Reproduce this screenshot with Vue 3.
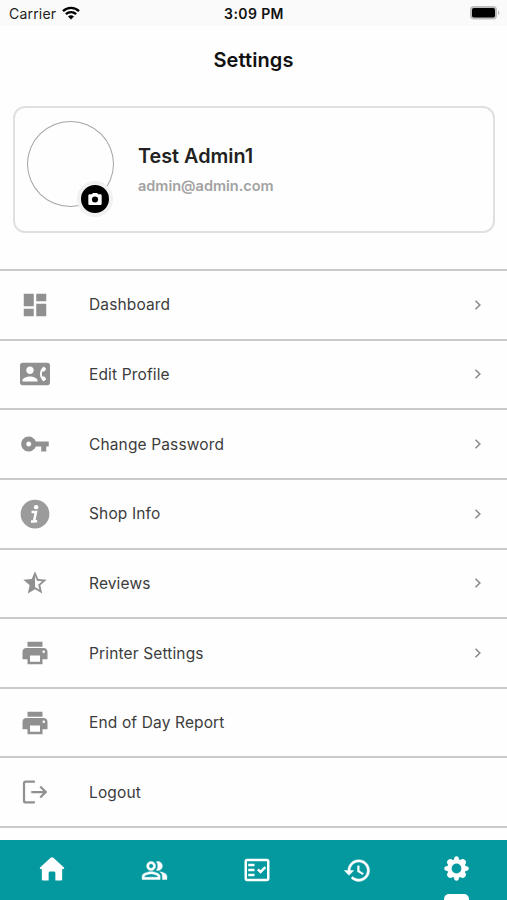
<template>
  <div class="screen">
    <!-- status bar -->
    <div class="status-bar">
      <div class="carrier">
        <span>Carrier</span>
        <svg class="wifi" viewBox="0 0 18 14">
          <path d="M1 5.2a11.4 11.4 0 0 1 16 0" />
          <path d="M3.9 8.2a7.3 7.3 0 0 1 10.2 0" />
          <path class="wifi-dot" d="M9 13.6l-3-3a4.3 4.3 0 0 1 6 0z" />
        </svg>
      </div>
      <span class="time">3:09 PM</span>
      <svg class="battery" viewBox="0 0 32 16">
        <rect x="1" y="1" width="27" height="13.5" rx="4" fill="#bdbdbd" />
        <path d="M29 5.2a3 3 0 0 1 0 5z" fill="#bdbdbd" />
        <rect x="3" y="3" width="23" height="9.5" rx="1.8" fill="#000" />
      </svg>
    </div>

    <h1 class="title">Settings</h1>

    <!-- profile card -->
    <div class="profile">
      <div class="avatar">
        <button class="camera" aria-label="camera">
          <svg viewBox="0 0 24 24">
            <path :d="cameraIcon" />
            <circle cx="12" cy="12.8" r="4.6" fill="#000" />
          </svg>
        </button>
      </div>
      <div class="profile-text">
        <p class="name">{{ user.name }}</p>
        <p class="email">{{ user.email }}</p>
      </div>
    </div>

    <!-- menu -->
    <ul class="menu">
      <li v-for="item in menuItems" :key="item.label" class="menu-item">
        <svg class="menu-icon" :class="item.icon" viewBox="0 0 24 24">
          <path :d="icons[item.icon]" />
          <g v-if="item.icon === 'info'" class="info-mark">
            <circle cx="12.9" cy="6.5" r="1.8" />
            <path d="M9.2 10.4h3.6l-1.4 6.6q-.2 1.3 2.3.6M8.8 18h3" />
          </g>
        </svg>
        <span class="menu-label">{{ item.label }}</span>
        <svg v-if="item.arrow" class="arrow" viewBox="0 0 8 12">
          <path d="M1.5 1.7l4.3 4.3-4.3 4.3" />
        </svg>
      </li>
    </ul>

    <!-- bottom tabs -->
    <nav class="tabs">
      <button
        v-for="tab in tabs"
        :key="tab"
        class="tab"
        :class="{ active: tab === activeTab }"
        :aria-label="tab"
        @click="activeTab = tab"
      >
        <svg :class="'tab-' + tab" viewBox="0 0 24 24">
          <path fill-rule="evenodd" :d="tabIcons[tab]" />
        </svg>
      </button>
    </nav>
  </div>
</template>

<script setup>
import { ref } from 'vue';

const user = { name: 'Test Admin1', email: 'admin@admin.com' };

const menuItems = [
  { label: 'Dashboard', icon: 'dashboard', arrow: true },
  { label: 'Edit Profile', icon: 'contact', arrow: true },
  { label: 'Change Password', icon: 'key', arrow: true },
  { label: 'Shop Info', icon: 'info', arrow: true },
  { label: 'Reviews', icon: 'star', arrow: true },
  { label: 'Printer Settings', icon: 'print', arrow: true },
  { label: 'End of Day Report', icon: 'print', arrow: false },
  { label: 'Logout', icon: 'logout', arrow: false },
];

const icons = {
  dashboard: 'M3 13h8V3H3v10zm0 8h8v-6H3v6zm10 0h8V11h-8v10zm0-18v6h8V3h-8z',
  contact:
    'M22 3H2C.9 3 0 3.9 0 5v14c0 1.1.9 2 2 2h20c1.1 0 1.99-.9 1.99-2L24 5c0-1.1-.9-2-2-2zM8 6c1.66 0 3 1.34 3 3s-1.34 3-3 3-3-1.34-3-3 1.34-3 3-3zm6 12H2v-1c0-2 4-3.1 6-3.1s6 1.1 6 3.1v1zm3.85-4h1.64L21 16l-1.99 1.99c-1.31-.98-2.28-2.38-2.73-3.99-.18-.64-.28-1.31-.28-2s.1-1.36.28-2c.45-1.62 1.42-3.01 2.73-3.99L21 8l-1.51 2h-1.64c-.22.63-.35 1.3-.35 2s.13 1.37.35 2z',
  key: 'M12.65 10C11.83 7.67 9.61 6 7 6c-3.31 0-6 2.69-6 6s2.69 6 6 6c2.61 0 4.83-1.67 5.65-4H17v4h4v-4h2v-4H12.65zM7 14c-1.1 0-2-.9-2-2s.9-2 2-2 2 .9 2 2-.9 2-2 2z',
  info: 'M12 .5a11.5 11.5 0 1 0 0 23a11.5 11.5 0 1 0 0-23z',
  star: 'M22 9.24l-7.19-.62L12 2 9.19 8.63 2 9.24l5.46 4.73L5.82 21 12 17.27 18.18 21l-1.63-7.03L22 9.24zM12 15.4V6.1l1.71 4.04 4.38.38-3.32 2.88 1 4.28L12 15.4z',
  print:
    'M19 8H5c-1.66 0-3 1.34-3 3v6h4v4h12v-4h4v-6c0-1.66-1.34-3-3-3zm-3 11H8v-5h8v5zm3-7c-.55 0-1-.45-1-1s.45-1 1-1 1 .45 1 1-.45 1-1 1zm-1-9H6v4h12V3z',
  logout: 'M11.9 3.7H4.6q-1.4 0-1.4 1.4v13.8q0 1.4 1.4 1.4h7.3M9 12h11.3M16.2 7.6l4.4 4.4-4.4 4.4',
};

const cameraIcon = 'M9 3L7.17 5H4c-1.1 0-2 .9-2 2v12c0 1.1.9 2 2 2h16c1.1 0 2-.9 2-2V7c0-1.1-.9-2-2-2h-3.17L15 3H9z';

const tabs = ['home', 'people', 'orders', 'history', 'settings'];
const activeTab = ref('settings');

const tabIcons = {
  home: 'M12 1.1q-.7 0-1.3.6L1 10.7q-1 1.1.5 1.2h1.1v9.6q0 1.2 1.2 1.2h5.1v-7q0-1.3 1.3-1.3h3.6q1.3 0 1.3 1.3v7h5.1q1.2 0 1.2-1.2v-9.6h1.1q1.5-.1.5-1.2l-3.5-3.3-6.2-5.7q-.6-.6-1.3-.6z',
  people:
    'M16.67 13.13C18.04 14.06 19 15.32 19 17v3h4v-3c0-2.18-3.57-3.47-6.33-3.87zM15 12c2.21 0 4-1.79 4-4s-1.79-4-4-4c-.47 0-.91.1-1.33.24C14.5 5.27 15 6.58 15 8s-.5 2.73-1.33 3.76c.42.14.86.24 1.33.24zM9 12c2.21 0 4-1.79 4-4s-1.79-4-4-4-4 1.79-4 4 1.79 4 4 4zm0-6c1.1 0 2 .9 2 2s-.9 2-2 2-2-.9-2-2 .9-2 2-2zM9 13c-2.67 0-8 1.34-8 4v3h16v-3c0-2.66-5.33-4-8-4zm6 5H3v-.99C3.2 16.29 6.3 15 9 15s5.8 1.29 6 2v1z',
  orders:
    'M20 3H4c-1.1 0-2 .9-2 2v14c0 1.1.9 2 2 2h16c1.1 0 2-.9 2-2V5c0-1.1-.9-2-2-2zm0 16H4V5h16v14zM19.41 10.42L17.99 9l-3.17 3.17-1.41-1.42L12 12.16 14.82 15zM5 7h5v2H5zM5 11h5v2H5zM5 15h5v2H5z',
  history:
    'M13 3c-4.97 0-9 4.03-9 9H1l3.89 3.89.07.14L9 12H6c0-3.87 3.13-7 7-7s7 3.13 7 7-3.13 7-7 7c-1.93 0-3.68-.79-4.94-2.06l-1.42 1.42C8.27 19.99 10.51 21 13 21c4.97 0 9-4.03 9-9s-4.03-9-9-9zm-1 5v5l4.28 2.54.72-1.21-3.5-2.08V8H12z',
  settings:
    'M9.6 3.4Q9.8.2 12 .2t2.4 3.2l1.2.5Q18 1.8 20.1 3.9t0 4.5l.5 1.2q3.2.2 3.2 2.4t-3.2 2.4l-.5 1.2q2.1 2.4 0 4.5t-4.5 0l-1.2.5q-.2 3.2-2.4 3.2t-2.4-3.2l-1.2-.5q-2.4 2.1-4.5 0t0-4.5l-.5-1.2Q.2 14.2.2 12t3.2-2.4l.5-1.2q-2.1-2.4 0-4.5t4.5 0zM12 7.3a4.7 4.7 0 1 0 0 9.4 4.7 4.7 0 0 0 0-9.4z',
};
</script>

<style>
body {
  margin: 0;
  background: #fff;
}
</style>

<style scoped>
.screen {
  display: flex;
  flex-direction: column;
  width: 507px;
  height: 900px;
  overflow: hidden;
  background: #fefefe;
  font-family: Inter, 'Liberation Sans', sans-serif;
}

/* status bar */
.status-bar {
  display: grid;
  grid-template-columns: 1fr auto 1fr;
  align-items: center;
  flex: none;
  height: 26px;
  padding: 1px 6px 0 7px;
  box-sizing: border-box;
  background: #fafafa;
  font-size: 14px;
  color: #222;
}
.carrier {
  display: flex;
  align-items: center;
  gap: 6px;
  padding-left: 2px;
  letter-spacing: 0.2px;
}
.wifi {
  width: 18px;
  height: 14px;
  margin-top: -2px;
  fill: none;
  stroke: #000;
  stroke-width: 2.4;
}
.wifi .wifi-dot {
  fill: #000;
  stroke: none;
}
.time {
  font-weight: 600;
  letter-spacing: 0.4px;
  color: #111;
}
.battery {
  justify-self: end;
  width: 32px;
  height: 16px;
  margin-top: -1px;
}

.title {
  flex: none;
  height: 80px;
  margin: 0;
  line-height: 68px;
  text-align: center;
  font-size: 20px;
  font-weight: 600;
  letter-spacing: 0.1px;
  color: #111;
}

/* profile card */
.profile {
  display: flex;
  flex: none;
  height: 127px;
  margin: 0 12px 36px 13px;
  padding: 13px 12px 12px;
  box-sizing: border-box;
  border: 2px solid #e0e0e0;
  border-radius: 12px;
}
.avatar {
  position: relative;
  width: 87px;
  height: 86px;
  box-sizing: border-box;
  border: 1px solid #a5a5a5;
  border-radius: 50%;
}
.camera {
  position: absolute;
  right: 0;
  bottom: -11px;
  display: flex;
  align-items: center;
  justify-content: center;
  width: 36px;
  height: 36px;
  padding: 0;
  border: 4px solid #f1f1f1;
  border-radius: 50%;
  background: #000;
}
.camera svg {
  width: 16px;
  height: 16px;
  fill: #fff;
}
.profile-text {
  margin: 22px 0 0 24px;
}
.name {
  margin: 0;
  font-size: 19.8px;
  line-height: 26px;
  font-weight: 600;
  color: #222;
}
.email {
  margin: 7px 0 0;
  font-size: 14.5px;
  line-height: 20px;
  font-weight: 600;
  color: #a2a2a2;
}

/* menu */
.menu {
  flex: 1;
  min-height: 0;
  margin: 0;
  padding: 0;
  list-style: none;
  border-top: 2px solid #cacaca;
}
.menu-item {
  display: grid;
  grid-template-columns: 30px 1fr 8px;
  column-gap: 39px;
  align-items: center;
  height: 69.65px;
  padding: 0 25px 0 20px;
  box-sizing: border-box;
  border-bottom: 2px solid #cacaca;
}
.menu-icon {
  justify-self: center;
  width: 30px;
  height: 30px;
  fill: #909090;
}
.menu-icon.star {
  width: 28px;
  height: 28px;
}
.menu-icon.info {
  fill: #9b9b9b;
}
.info-mark circle {
  fill: #fff;
}
.info-mark path {
  fill: none;
  stroke: #fff;
  stroke-width: 2;
}
.menu-icon.logout {
  fill: none;
  stroke: #909090;
  stroke-width: 1.8;
}
.menu-label {
  font-size: 15.5px;
  letter-spacing: 0.14px;
  color: #3c3c3c;
}
.arrow {
  width: 8px;
  height: 12px;
  fill: none;
  stroke: #8c8c8c;
  stroke-width: 1.6;
}

/* bottom tabs */
.tabs {
  display: grid;
  grid-template-columns: 103px 103px 101px 101px 97px;
  flex: none;
  height: 60px;
  background: #04989f;
}
.tab {
  position: relative;
  display: flex;
  align-items: center;
  justify-content: center;
  padding: 0;
  border: none;
  background: none;
}
.tab svg {
  width: 30px;
  height: 30px;
  fill: #fff;
}
.tab .tab-home {
  width: 26px;
  height: 26px;
  margin-bottom: 3px;
}
.tab .tab-people {
  width: 27px;
  height: 27px;
  stroke: #fff;
  stroke-width: 0.4;
}
.tab .tab-history {
  width: 29px;
  height: 29px;
  stroke: #fff;
  stroke-width: 0.3;
}
.tab .tab-settings {
  width: 25px;
  height: 25px;
  margin-bottom: 3px;
}
.tab.active::after {
  content: '';
  position: absolute;
  left: calc(50% - 12.5px);
  bottom: 0;
  width: 25px;
  height: 6px;
  border-radius: 5px 5px 0 0;
  background: #fff;
}
</style>
